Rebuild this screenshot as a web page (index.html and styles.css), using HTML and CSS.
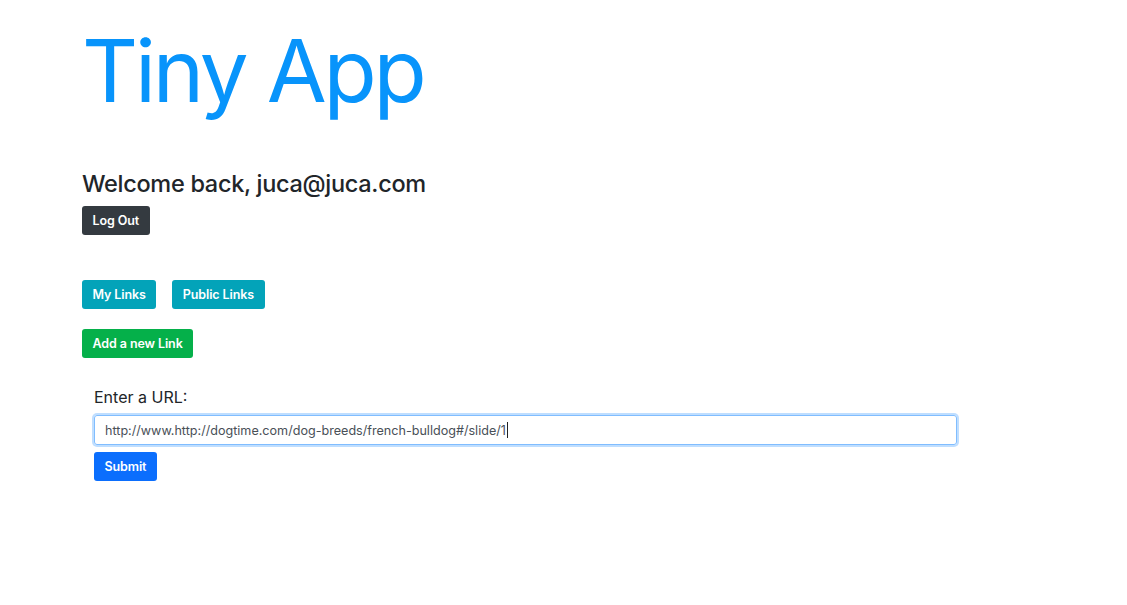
FILE: index.html
```html
<!DOCTYPE html>
<html>
<head>
<meta charset="utf-8">
<link rel="stylesheet" href="styles.css">
</head>
<body>
<main class="page">
  <h1 class="title">Tiny App</h1>
  <section class="welcome">
    <h3 class="welcome-text">Welcome back, juca@juca.com</h3>
    <button class="btn btn-dark">Log Out</button>
  </section>
  <nav class="links">
    <button class="btn btn-teal">My Links</button>
    <button class="btn btn-teal">Public Links</button>
  </nav>
  <div class="add">
    <button class="btn btn-green">Add a new Link</button>
  </div>
  <form class="url-form">
    <label class="label" for="url">Enter a URL:</label>
    <div class="input-box"><span class="input-text">http://www.http://dogtime.com/dog-breeds/french-bulldog#/slide/1</span><span class="caret"></span></div>
    <button class="btn btn-blue" type="button">Submit</button>
  </form>
</main>
</body>
</html>
```

FILE: styles.css
```css
* { box-sizing: border-box; }
html, body { margin: 0; padding: 0; background: #fff; }
body {
  font-family: Inter, "Helvetica Neue", Arial, sans-serif;
  color: #212529;
  width: 1127px;
  height: 605px;
  overflow: hidden;
}
.page {
  padding: 22px 0 0 82px;
}
.title {
  margin: 0;
  font-size: 87px;
  font-weight: 400;
  line-height: 98px;
  color: #0894fb;
  letter-spacing: -3.2px;
}
.welcome {
  margin-top: 48px;
}
.welcome-text {
  margin: 0 0 6px;
  font-size: 23.5px;
  font-weight: 500;
  line-height: 32px;
  letter-spacing: -0.3px;
  color: #212529;
}
.btn {
  display: inline-block;
  border: none;
  border-radius: 3px;
  font-family: Inter, "Helvetica Neue", Arial, sans-serif;
  font-size: 12.5px;
  font-weight: 600;
  letter-spacing: -0.1px;
  color: #fff;
  height: 29px;
  padding: 0 10.5px;
  line-height: 29px;
  cursor: pointer;
}
.btn-dark { background: #343a40; }
.btn-teal { background: #03a3b9; }
.btn-green { background: #05b04a; }
.btn-blue { background: #0b6efd; }
.links {
  margin-top: 45px;
  display: flex;
  gap: 16px;
}
.add {
  margin-top: 20px;
}
.url-form {
  margin-top: 29px;
  padding-left: 12px;
  width: 875px;
  display: flex;
  flex-direction: column;
  align-items: flex-start;
}
.label {
  font-size: 16px;
  line-height: 20px;
  color: #212529;
}
.input-box {
  margin-top: 8px;
  width: 863px;
  height: 30px;
  border: 1px solid #80bdff;
  border-radius: 3px;
  box-shadow: 0 0 0 2px rgba(0, 123, 255, 0.25);
  display: flex;
  align-items: center;
  padding-left: 10px;
  font-size: 12.6px;
  color: #495057;
}
.caret {
  display: inline-block;
  width: 1px;
  height: 16px;
  background: #222;
  margin-left: 1px;
}
.btn-blue {
  margin-top: 7px;
}
```
